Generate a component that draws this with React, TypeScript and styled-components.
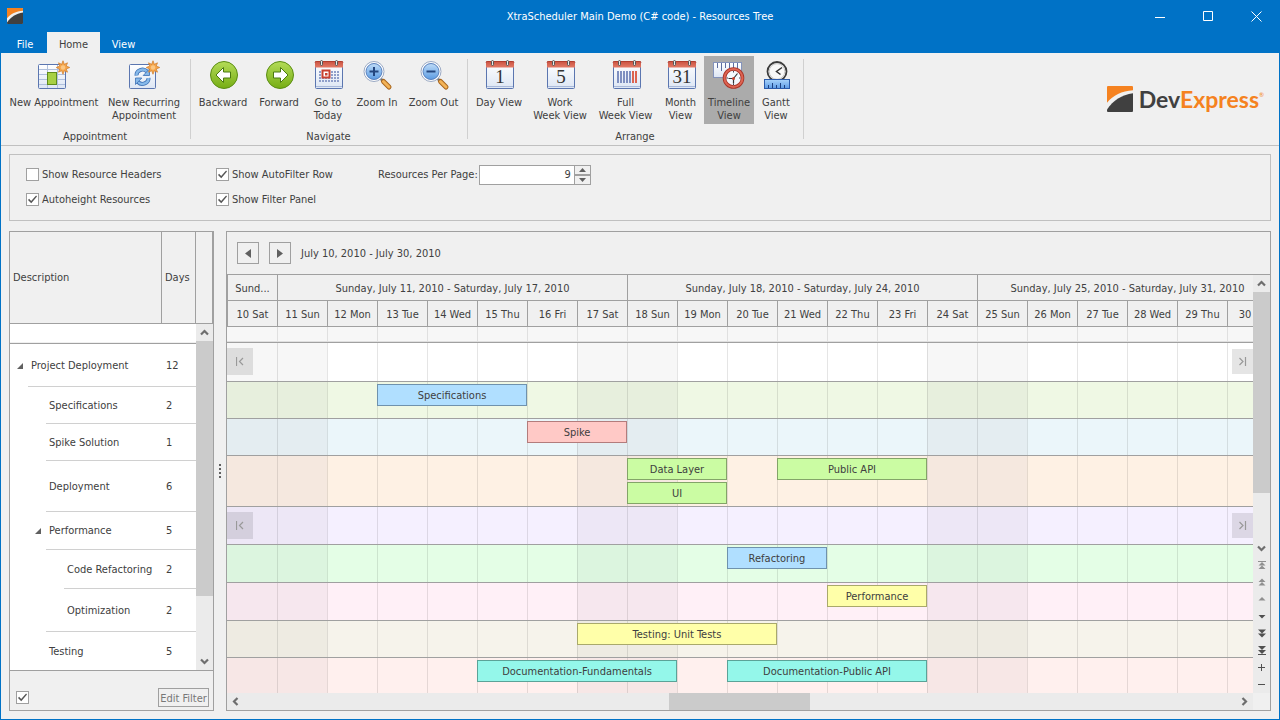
import React from "react";
import styled, { createGlobalStyle, css } from "styled-components";

const BLUE = "#0072c6";
const FACE = "#f0f0f0";
const LINE = "#a0a0a0";
const TEXT = "#404040";

const GlobalStyle = createGlobalStyle`
  *, *::before, *::after { box-sizing: border-box; }
  body {
    margin: 0;
    background: ${FACE};
    color: ${TEXT};
    font: 11px/13px "DejaVu Sans Condensed", Tahoma, "DejaVu Sans", sans-serif;
  }
  button, input { font: inherit; color: inherit; margin: 0; padding: 0; }
  svg { display: block; }
`;

/* ---------- window frame ---------- */

const Window = styled.div`
  min-height: 100vh;
  display: flex;
  flex-direction: column;
`;

const TitleBar = styled.header`
  display: grid;
  grid-template-columns: 1fr auto 1fr;
  align-items: center;
  height: 32px;
  background: ${BLUE};
  color: #fff;
`;

const AppIcon = styled.span`
  margin-left: 7px;
`;

const Title = styled.h1`
  margin: 0;
  font: inherit;
`;

const WindowButtons = styled.div`
  display: flex;
  justify-content: flex-end;
`;

const WindowButton = styled.button`
  display: grid;
  place-items: center;
  width: 48px;
  height: 32px;
  border: 0;
  background: none;
  color: #fff;
`;

const TabBar = styled.nav`
  display: flex;
  height: 21px;
  padding-left: 3px;
  background: ${BLUE};
`;

const Tab = styled.button<{ $width: number; $active?: boolean }>`
  width: ${(p) => p.$width}px;
  padding-top: 3px;
  border: 0;
  text-align: center;
  background: ${(p) => (p.$active ? FACE : "transparent")};
  color: ${(p) => (p.$active ? TEXT : "#fff")};
`;

const Frame = styled.div`
  flex: 1;
  display: flex;
  flex-direction: column;
  border: solid ${BLUE};
  border-width: 0 1px 1px;
`;

/* ---------- ribbon ---------- */

const Ribbon = styled.div`
  display: flex;
  align-items: center;
  justify-content: space-between;
  height: 93px;
  border-bottom: 1px solid #c0c0c0;
`;

const RibbonGroups = styled.div`
  display: flex;
`;

const RibbonGroup = styled.section`
  display: flex;
  flex-direction: column;
  justify-content: space-between;
  height: 87px;
  padding: 0 6px 0 4px;
  background: linear-gradient(#d0d0d0, #d0d0d0) right 3px / 1px 80px no-repeat;
`;

const RibbonItems = styled.div`
  display: flex;
`;

const GroupCaption = styled.div`
  text-align: center;
`;

const RibbonButton = styled.button<{ $width: number; $active?: boolean }>`
  display: flex;
  flex-direction: column;
  align-items: center;
  gap: 5px;
  width: ${(p) => p.$width}px;
  height: 68px;
  padding-top: 3px;
  border: 0;
  background: ${(p) => (p.$active ? "#ababab" : "transparent")};
  white-space: pre;
  text-align: center;
`;

const Brand = styled.div`
  display: flex;
  align-items: center;
  gap: 6px;
  margin-right: 15px;
`;

const BrandName = styled.span`
  font: 700 23px/26px Lato, sans-serif;
  color: #404040;
`;

const BrandAccent = styled.span`
  color: #f58220;
`;

const Registered = styled.sup`
  font: 6px/8px Lato, sans-serif;
  vertical-align: 11px;
  color: #f58220;
`;

/* ---------- option panel ---------- */

const Content = styled.main`
  flex: 1;
  display: flex;
  flex-direction: column;
  gap: 10px;
  padding: 8px;
`;

const Options = styled.section`
  display: grid;
  grid-template-columns: 190px 162px auto;
  grid-template-rows: 25px 25px;
  align-items: center;
  justify-content: start;
  height: 67px;
  padding: 7px 16px;
  border: 1px solid #c0c0c0;
`;

const CheckLabel = styled.label`
  display: flex;
  align-items: center;
  gap: 3px;
`;

const CheckBox = styled.input.attrs({ type: "checkbox" })`
  appearance: none;
  display: grid;
  place-items: center;
  width: 13px;
  height: 13px;
  border: 1px solid ${LINE};
  background: #fff;

  &:checked::before {
    content: "";
    width: 9px;
    height: 9px;
    background: #555;
    clip-path: polygon(0 55%, 12% 42%, 35% 68%, 90% 5%, 100% 16%, 36% 92%);
  }
`;

const SpinField = styled.div`
  display: flex;
  align-items: center;
`;

const SpinInput = styled.input`
  width: 96px;
  height: 20px;
  margin-left: 1px;
  padding-right: 3px;
  border: 1px solid ${LINE};
  background: #fff;
  text-align: right;
`;

const SpinButtons = styled.div`
  display: flex;
  flex-direction: column;
`;

const SpinButton = styled.button`
  display: grid;
  place-items: center;
  width: 16px;
  height: 10px;
  border: 1px solid ${LINE};
  border-left: 0;
  background: ${FACE};
`;

/* ---------- shared scroll bars ---------- */

const ScrollBar = styled.div<{ $horizontal?: boolean }>`
  display: flex;
  flex-direction: ${(p) => (p.$horizontal ? "row" : "column")};
  background: #ebebeb;
`;

const ScrollButton = styled.button`
  display: grid;
  place-items: center;
  flex: none;
  width: 17px;
  height: 17px;
  border: 0;
  background: none;
  color: #777;
`;

const ScrollSpace = styled.span<{ $size: number; $thumb?: boolean }>`
  flex: ${(p) => p.$size} 1 0;
  background: ${(p) => (p.$thumb ? "#cbcbcb" : "transparent")};
`;

/* ---------- resources tree ---------- */

const Workspace = styled.div`
  flex: 1;
  display: grid;
  grid-template-columns: 205px 12px minmax(0, 1fr);
`;

const TreePanel = styled.section`
  display: grid;
  grid-template-columns: minmax(0, 1fr) 17px;
  grid-template-rows: 92px 1fr auto;
  border: 1px solid ${LINE};
`;

const TreeTable = styled.table`
  grid-area: 1 / 1 / 3 / 3;
  display: flex;
  flex-direction: column;
`;

const TreeHead = styled.thead`
  display: block;
`;

const TreeHeadRow = styled.tr`
  display: grid;
  grid-template-columns: minmax(0, 1fr) 34px 17px;
  height: 92px;
  border-bottom: 1px solid ${LINE};
`;

const TreeHeadCell = styled.th`
  display: flex;
  align-items: center;
  padding: 0 3px;
  border-right: 1px solid ${LINE};
  font-weight: 400;
`;

const TreeBody = styled.tbody`
  flex: 1;
  display: block;
  margin-right: 17px;
  background: #fff;
`;

const FilterRow = styled.tr`
  display: grid;
  grid-template-columns: minmax(0, 1fr) 34px;
  height: 20px;
  border-bottom: 1px solid ${LINE};
  box-shadow: inset 0 -1px 0 #f0f0f0;
`;

const FilterCell = styled.td`
  display: flex;
  padding: 0;
`;

const FilterInput = styled.input`
  width: 100%;
  padding: 0 3px;
  border: 0;
  background: transparent;
`;

const TreeRow = styled.tr<{ $height: number; $indent: number; $last?: boolean }>`
  display: grid;
  grid-template-columns: minmax(0, 1fr) 34px;
  align-items: center;
  height: ${(p) => p.$height}px;
  margin-left: ${(p) => 18 * p.$indent + 18}px;
  border-bottom: ${(p) => (p.$last ? "0" : "1px solid #d0d0d0")};
`;

const TreeName = styled.td<{ $shift: number }>`
  display: flex;
  align-items: center;
  padding: 0 0 0 ${(p) => 18 * p.$shift + 3}px;
  white-space: nowrap;
`;

const Expander = styled.button`
  width: 14px;
  height: 13px;
  margin-left: -14px;
  border: 0;
  background: none;
`;

const TreeDays = styled.td`
  padding: 0 0 0 4px;
`;

const TreeScroll = styled(ScrollBar)`
  grid-area: 2 / 2;
`;

const TreeFooter = styled.div`
  grid-column: 1 / -1;
  display: flex;
  align-items: center;
  justify-content: space-between;
  height: 40px;
  padding: 14px 4px 0 6px;
  border-top: 1px solid ${LINE};
`;

const EditFilter = styled.button`
  display: flex;
  align-items: center;
  justify-content: center;
  width: 51px;
  height: 19px;
  padding-top: 1px;
  border: 1px solid ${LINE};
  background: ${FACE};
  color: #777;
  white-space: nowrap;
`;

const Splitter = styled.div`
  display: flex;
  flex-direction: column;
  align-items: center;
  justify-content: center;
  gap: 2px;
`;

const SplitterDot = styled.span`
  width: 2px;
  height: 2px;
  background: #606060;
`;

/* ---------- scheduler ---------- */

const Scheduler = styled.section`
  display: flex;
  flex-direction: column;
  border: 1px solid ${LINE};
`;

const DateNavigator = styled.div`
  display: flex;
  align-items: center;
  gap: 10px;
  height: 43px;
  padding-left: 10px;
  border-bottom: 1px solid ${LINE};
`;

const DateButton = styled.button`
  display: grid;
  place-items: center;
  width: 22px;
  height: 22px;
  border: 1px solid ${LINE};
  background: ${FACE};
`;

const SchedulerBody = styled.div`
  flex: 1;
  display: grid;
  grid-template-columns: minmax(0, 1fr) 17px;
  grid-template-rows: 1fr 17px;
`;

const Timeline = styled.div`
  display: flex;
  flex-direction: column;
  overflow: hidden;
`;

const dayColumns = css`
  display: grid;
  grid-template-columns: repeat(21, minmax(50px, 1fr));
`;

const HeaderRow = styled.div`
  ${dayColumns}
  height: 26px;
`;

const HeaderCell = styled.div<{ $span: number }>`
  grid-column: span ${(p) => p.$span};
  display: flex;
  align-items: center;
  justify-content: center;
  padding-top: 2px;
  border: solid ${LINE};
  border-width: 0 0 1px 1px;
  white-space: nowrap;
`;

const AllDayRow = styled.div`
  ${dayColumns}
  height: 16px;
  border-bottom: 1px solid ${LINE};
`;

const AllDayCell = styled.div`
  background: #f7f7f7;
  border-bottom: 1px solid #e0e0e0;

  & + & { border-left: 1px solid #e0e0e0; }
`;

const ResourceRow = styled.div<{ $height: number; $last?: boolean }>`
  position: relative;
  display: flex;
  flex-direction: column;
  flex: ${(p) => (p.$last ? "1 0" : "0 0")} ${(p) => p.$height}px;
  border-bottom: ${(p) => (p.$last ? "0" : `1px solid ${LINE}`)};
`;

const ResourceGrid = styled.div<{ $lanes: number }>`
  ${dayColumns}
  flex: 1;
  grid-template-rows: 2px repeat(${(p) => p.$lanes}, 24px) 1fr;
`;

const DayCell = styled.div<{ $column: number; $color: string }>`
  grid-column: ${(p) => p.$column};
  grid-row: 1 / -1;
  background: ${(p) => p.$color};
  border-left: ${(p) => (p.$column > 1 ? "1px solid rgba(0, 0, 0, 0.1)" : "0")};
`;

const Appointment = styled.div<{ $start: number; $days: number; $lane: number; $fill: string; $edge: string }>`
  grid-column: ${(p) => p.$start} / span ${(p) => p.$days};
  grid-row: ${(p) => p.$lane + 1};
  display: flex;
  align-items: center;
  justify-content: center;
  height: 22px;
  border: 1px solid ${(p) => p.$edge};
  background: ${(p) => p.$fill};
  white-space: nowrap;
`;

const JumpButton = styled.button<{ $side: "left" | "right" }>`
  position: absolute;
  top: ${(p) => (p.$side === "left" ? 5 : 6)}px;
  ${(p) => p.$side}: 0;
  display: grid;
  place-items: center;
  width: ${(p) => (p.$side === "left" ? 26 : 21)}px;
  height: ${(p) => (p.$side === "left" ? 27 : 25)}px;
  border: 0;
  background: rgba(0, 0, 0, 0.1);
`;

/* ---------- drawings ---------- */

const BrandMark = ({ size }: { size: number }) => (
  <svg width={size} height={size} viewBox="0 0 25 25" aria-hidden="true">
    <rect width="25" height="25" rx="1.5" fill="#f0f0f0" />
    <path d="M1 0H24Q25 0 25 1V4.200C14 5 6 9 0 16V1Q0 0 1 0Z" fill="#f58220" />
    <path d="M25 7V24Q25 25 24 25H1Q0 25 0 24V22.500C6 14 14 8.500 25 7Z" fill="#404040" />
  </svg>
);

const Defs = () => (
  <svg width="0" height="0" style={{ position: "absolute" }} aria-hidden="true">
    <defs>
      <linearGradient id="paper" x1="0" y1="0" x2="0" y2="1">
        <stop offset="0" stopColor="#ffffff" />
        <stop offset="1" stopColor="#dde6f4" />
      </linearGradient>
      <linearGradient id="red" x1="0" y1="0" x2="0" y2="1">
        <stop offset="0" stopColor="#c9503f" />
        <stop offset="1" stopColor="#e37a66" />
      </linearGradient>
      <linearGradient id="green" x1="0" y1="0" x2="0" y2="1">
        <stop offset="0" stopColor="#b4dc58" />
        <stop offset="1" stopColor="#76ad14" />
      </linearGradient>
      <linearGradient id="lens" x1="0" y1="0" x2="0" y2="1">
        <stop offset="0" stopColor="#bfdcf8" />
        <stop offset="1" stopColor="#5b9be2" />
      </linearGradient>
      <linearGradient id="ruler" x1="0" y1="0" x2="0" y2="1">
        <stop offset="0" stopColor="#a9d4fb" />
        <stop offset="1" stopColor="#5d9be6" />
      </linearGradient>
    </defs>
  </svg>
);

const Icon = ({ children }: { children: React.ReactNode }) => (
  <svg width="32" height="32" viewBox="0 0 32 32" fill="none" aria-hidden="true">
    {children}
  </svg>
);

const Spark = () => (
  <g transform="translate(25 8.500) scale(0.900)">
    <path
      d="M0-7.500 1.500-3.500 5-5.200 3.600-1.600 7.500 0 3.600 1.600 5 5.200 1.500 3.600 0 7.500-1.500 3.600-5 5.200-3.600 1.600-7.500 0-3.600-1.600-5-5.200-1.500-3.500Z"
      fill="#f5a54a"
      stroke="#cf7d2c"
      strokeWidth="0.8"
    />
    <circle r="2.500" fill="#fbc783" />
  </g>
);

const NewAppointmentIcon = () => (
  <Icon>
    <rect x="0.500" y="5.500" width="27" height="24" rx="1" fill="url(#paper)" stroke="#5b76b0" />
    <path d="M1 10.500H27M1 15.500H27M1 20.500H27M1 25.500H27" stroke="#b0c0dc" />
    <path d="M9.500 6V29M19.500 6V29" stroke="#b0c0dc" />
    <rect x="9.500" y="13.500" width="9" height="12" fill="#a7d044" stroke="#5f8c1c" />
    <Spark />
  </Icon>
);

const RecurringIcon = () => (
  <Icon>
    <rect x="1.500" y="5.500" width="26" height="24" rx="1" fill="url(#paper)" stroke="#5b76b0" />
    <path d="M8.500 16.500A6 5.500 0 0 1 19 12.500" stroke="#3b6fb4" strokeWidth="4" />
    <path d="M8.500 16.500A6 5.500 0 0 1 19 12.500" stroke="#86b9ea" strokeWidth="2.400" />
    <path d="M21.500 10V16.500H15.200Z" fill="#86b9ea" stroke="#3b6fb4" strokeWidth="0.800" />
    <path d="M20.500 19A6 5.500 0 0 1 10 23" stroke="#3b6fb4" strokeWidth="4" />
    <path d="M20.500 19A6 5.500 0 0 1 10 23" stroke="#86b9ea" strokeWidth="2.400" />
    <path d="M7.500 25.500V19H13.800Z" fill="#86b9ea" stroke="#3b6fb4" strokeWidth="0.800" />
    <Spark />
  </Icon>
);

const ArrowIcon = ({ forward }: { forward?: boolean }) => (
  <Icon>
    <circle cx="17" cy="16" r="13.500" fill="url(#green)" stroke="#5b8d13" />
    <path
      d={forward ? "M25 16 17.500 8.500V13H10.500V19H17.500V23.500Z" : "M9 16 16.500 8.500V13H23.500V19H16.500V23.500Z"}
      fill="#fff"
      stroke="#4a7a10"
    />
  </Icon>
);

const Calendar = ({ children }: { children: React.ReactNode }) => (
  <Icon>
    <rect x="3.500" y="2.500" width="27" height="27" rx="1" fill="url(#paper)" stroke="#5b76b0" />
    <path d="M4 27.500H30" stroke="#a9b9da" />
    <path d="M3 8.500V3.500Q3 2 4.500 2H29.500Q31 2 31 3.500V8.500Z" fill="url(#red)" />
    <path d="M3 3.500Q3 2.500 4.500 2.500H29.500Q31 2.500 31 3.500" stroke="#b23d2e" />
    <rect x="8.500" y="1.500" width="2" height="5" rx="1" fill="#e8e8e8" stroke="#555" />
    <rect x="23.500" y="1.500" width="2" height="5" rx="1" fill="#e8e8e8" stroke="#555" />
    {children}
  </Icon>
);

const DateCalendar = ({ day }: { day: string }) => (
  <Calendar>
    <text x="17" y="24" textAnchor="middle" fill="#333" fontFamily="Liberation Serif, serif" fontSize="19">
      {day}
    </text>
  </Calendar>
);

const TodayIcon = () => (
  <Calendar>
    {[12, 15, 18, 21].map((y) => (
      <path key={y} d={`M7 ${y + 1}H27`} stroke="#8f9fca" strokeWidth="2" strokeDasharray="2 1" />
    ))}
    <rect x="10.500" y="11.500" width="7" height="7" fill="#fff" stroke="#c8402f" strokeWidth="2" />
    <rect x="13" y="14" width="2.500" height="2.500" fill="#c8402f" />
  </Calendar>
);

const FullWeekIcon = () => (
  <Calendar>
    <path d="M8 12V24M11 12V24M14 12V24M17 12V24M20 12V24" stroke="#7e8fc0" strokeWidth="2" />
    <path d="M23 12V24M26 12V24" stroke="#dd6450" strokeWidth="2" />
  </Calendar>
);

const ZoomIcon = ({ plus }: { plus?: boolean }) => (
  <Icon>
    <path d="M19.500 19.500 23 23" stroke="#777" strokeWidth="2.500" />
    <path d="M22.500 22.500 28 28" stroke="#a8651c" strokeWidth="5" strokeLinecap="round" />
    <path d="M22.500 22.500 28 28" stroke="#f3b357" strokeWidth="3" strokeLinecap="round" />
    <circle cx="13" cy="12.500" r="10" fill="#fff" stroke="#9aa9c4" />
    <circle cx="13" cy="12.500" r="8" fill="url(#lens)" stroke="#5880bd" />
    <path d={plus ? "M8.500 12.500H17.500M13 8V17" : "M8.500 12.500H17.500"} stroke="#24467e" strokeWidth="2" />
  </Icon>
);

const TimelineIcon = () => (
  <Icon>
    <rect x="0.500" y="3.500" width="28" height="15" fill="url(#paper)" stroke="#8493bb" />
    <path d="M4.500 4V9M8.500 4V12M12.500 4V9M16.500 4V9M20.500 4V12M24.500 4V9" stroke="#5c6da0" />
    <circle cx="20.500" cy="19" r="9" fill="#f4f8fd" stroke="#a83428" strokeWidth="3.600" />
    <circle cx="20.500" cy="19" r="9" stroke="#de6452" strokeWidth="2" />
    <path d="M20.500 12V13.500M20.500 24.500V26M13.500 19H15M26 19H27.500" stroke="#445" />
    <path d="M15.500 19.500H20.500L24.500 14.500M20.500 19.500V24.500" stroke="#333" strokeWidth="1.200" />
    <circle cx="20.500" cy="19.500" r="1.500" fill="#c8402f" />
  </Icon>
);

const GanttIcon = () => (
  <Icon>
    <circle cx="17" cy="12.500" r="9.500" fill="#f8f8f8" stroke="#3c3c3c" strokeWidth="1.800" />
    <circle cx="17" cy="12.500" r="7.800" stroke="#c8c8c8" />
    <path d="M22 8.500 16.500 12.500 20.500 15.500" stroke="#333" strokeWidth="1.500" />
    <rect x="4.500" y="20.500" width="25" height="9" fill="url(#ruler)" stroke="#2c5cab" />
    <path d="M8.500 29V26M12.500 29V24M16.500 29V26M20.500 29V24M24.500 29V26" stroke="#1f4280" />
  </Icon>
);

const turn = { up: 0, right: 90, down: 180, left: 270 };

const Chevron = ({ to }: { to: keyof typeof turn }) => (
  <svg width="9" height="9" viewBox="0 0 9 9" fill="none" aria-hidden="true">
    <path d="M1 6.500 4.500 3 8 6.500" transform={`rotate(${turn[to]} 4.500 4.500)`} stroke="#6e6e6e" strokeWidth="2.200" />
  </svg>
);

const Triangle = ({ to }: { to: "left" | "right" }) => (
  <svg width="8" height="9" viewBox="0 0 8 9" aria-hidden="true">
    <path d={to === "left" ? "M7 0V9L1 4.500Z" : "M1 0V9L7 4.500Z"} fill="#606060" />
  </svg>
);

const SpinGlyph = ({ down }: { down?: boolean }) => (
  <svg width="7" height="4" viewBox="0 0 7 4" aria-hidden="true">
    <path d={down ? "M0 0H7L3.500 4Z" : "M0 4H7L3.500 0Z"} fill="#606060" />
  </svg>
);

const JumpGlyph = ({ to }: { to: "left" | "right" }) => (
  <svg width="9" height="9" viewBox="0 0 9 9" fill="none" aria-hidden="true">
    <path
      d={to === "left" ? "M0.500 0V9M7 1 3.500 4.500 7 8" : "M7.500 0V9M1.500 1 5 4.500 1.500 8"}
      stroke="#999"
      strokeWidth="1.200"
    />
  </svg>
);

/* ---------- data ---------- */

const ribbonGroups = [
  {
    caption: "Appointment",
    items: [
      { text: "New Appointment", width: 98, icon: <NewAppointmentIcon /> },
      { text: "New Recurring\nAppointment", width: 82, icon: <RecurringIcon /> },
    ],
  },
  {
    caption: "Navigate",
    items: [
      { text: "Backward", width: 56, icon: <ArrowIcon /> },
      { text: "Forward", width: 56, icon: <ArrowIcon forward /> },
      { text: "Go to\nToday", width: 42, icon: <TodayIcon /> },
      { text: "Zoom In", width: 56, icon: <ZoomIcon plus /> },
      { text: "Zoom Out", width: 57, icon: <ZoomIcon /> },
    ],
  },
  {
    caption: "Arrange",
    items: [
      { text: "Day View", width: 54, icon: <DateCalendar day="1" /> },
      { text: "Work\nWeek View", width: 68, icon: <DateCalendar day="5" /> },
      { text: "Full\nWeek View", width: 63, icon: <FullWeekIcon /> },
      { text: "Month\nView", width: 47, icon: <DateCalendar day="31" /> },
      { text: "Timeline\nView", width: 50, icon: <TimelineIcon />, active: true },
      { text: "Gantt\nView", width: 44, icon: <GanttIcon /> },
    ],
  },
];

const tree = [
  { name: "Project Deployment", days: 12, level: 0, height: 43, parent: true },
  { name: "Specifications", days: 2, level: 1, height: 37 },
  { name: "Spike Solution", days: 1, level: 1, height: 37 },
  { name: "Deployment", days: 6, level: 1, height: 51 },
  { name: "Performance", days: 5, level: 1, height: 38, parent: true },
  { name: "Code Refactoring", days: 2, level: 2, height: 39 },
  { name: "Optimization", days: 2, level: 2, height: 43 },
  { name: "Testing", days: 5, level: 1, height: 38 },
];

const weeks = [
  { text: "Sund...", days: 1 },
  { text: "Sunday, July 11, 2010 - Saturday, July 17, 2010", days: 7 },
  { text: "Sunday, July 18, 2010 - Saturday, July 24, 2010", days: 7 },
  { text: "Sunday, July 25, 2010 - Saturday, July 31, 2010", days: 6 },
];

const weekdayNames = ["Sun", "Mon", "Tue", "Wed", "Thu", "Fri", "Sat"];
const days = Array.from({ length: 21 }, (_, i) => ({
  text: `${10 + i} ${weekdayNames[(i + 6) % 7]}`,
  weekend: (i + 6) % 7 === 0 || (i + 6) % 7 === 6,
}));

const paint = {
  blue: ["#b0dfff", "#6f92ad"],
  pink: ["#ffc9c6", "#b37c7c"],
  green: ["#cbfca3", "#83a468"],
  yellow: ["#ffffa9", "#a9a96b"],
  teal: ["#94f7ea", "#5ba398"],
};

type Item = { text: string; date: number; days: number; lane?: number; color: keyof typeof paint };
type Resource = { day: string; weekend: string; height: number; lanes?: number; jump?: boolean; items: Item[] };

const resources: Resource[] = [
  { day: "#ffffff", weekend: "#f7f7f7", height: 39, jump: true, items: [] },
  { day: "#eff8e4", weekend: "#e7efdd", height: 37, items: [{ text: "Specifications", date: 13, days: 3, color: "blue" }] },
  { day: "#ebf6fa", weekend: "#e4edf1", height: 37, items: [{ text: "Spike", date: 16, days: 2, color: "pink" }] },
  {
    day: "#fef1e4",
    weekend: "#f5e8df",
    height: 51,
    lanes: 2,
    items: [
      { text: "Data Layer", date: 18, days: 2, color: "green" },
      { text: "UI", date: 18, days: 2, lane: 2, color: "green" },
      { text: "Public API", date: 21, days: 3, color: "green" },
    ],
  },
  { day: "#f5f0ff", weekend: "#ede7f6", height: 38, jump: true, items: [] },
  { day: "#e4fee6", weekend: "#dcf5df", height: 38, items: [{ text: "Refactoring", date: 20, days: 2, color: "blue" }] },
  { day: "#fff0f7", weekend: "#f6e7ee", height: 38, items: [{ text: "Performance", date: 22, days: 2, color: "yellow" }] },
  { day: "#f6f3eb", weekend: "#eeebe2", height: 37, items: [{ text: "Testing: Unit Tests", date: 17, days: 4, color: "yellow" }] },
  {
    day: "#fff0ee",
    weekend: "#f7e7e6",
    height: 35,
    items: [
      { text: "Documentation-Fundamentals", date: 15, days: 4, color: "teal" },
      { text: "Documentation-Public API", date: 20, days: 4, color: "teal" },
    ],
  },
];

const pagers = [
  { label: "First resource", path: "M1 0H9V1H1ZM5 1 8.500 4.500H1.500ZM5 4.500 8.500 8H1.500Z", dim: true },
  { label: "Previous page", path: "M5 0.500 8.500 4H1.500ZM5 4 8.500 7.500H1.500Z", dim: true },
  { label: "Previous resource", path: "M5 2 8.500 5.500H1.500Z", dim: true },
  { label: "Next resource", path: "M1.500 3H8.500L5 6.500Z" },
  { label: "Next page", path: "M1 0.500H9L5 4.500ZM1 4.500H9L5 8.500Z" },
  { label: "Last resource", path: "M1 0H9L5 4ZM1 4H9L5 8ZM1 8H9V9H1Z" },
  { label: "More resources per page", path: "M1 4H4V1H5V4H8V5H5V8H4V5H1Z" },
  { label: "Fewer resources per page", path: "M1 4H8V5H1Z" },
];

/* ---------- page ---------- */

const VerticalScroll = ({ thumb, rest }: { thumb: number; rest: number }) => (
  <>
    <ScrollButton aria-label="Scroll up"><Chevron to="up" /></ScrollButton>
    <ScrollSpace $size={thumb} $thumb />
    <ScrollSpace $size={rest} />
    <ScrollButton aria-label="Scroll down"><Chevron to="down" /></ScrollButton>
  </>
);

export default function App() {
  return (
    <Window>
      <GlobalStyle />
      <Defs />
      <TitleBar>
        <AppIcon><BrandMark size={16} /></AppIcon>
        <Title>XtraScheduler Main Demo (C# code) - Resources Tree</Title>
        <WindowButtons>
          <WindowButton aria-label="Minimize">
            <svg width="11" height="11" stroke="currentColor" fill="none"><path d="M0 6.500H10" /></svg>
          </WindowButton>
          <WindowButton aria-label="Maximize">
            <svg width="11" height="11" stroke="currentColor" fill="none"><path d="M0.500 0.500H9.500V9.500H0.500Z" /></svg>
          </WindowButton>
          <WindowButton aria-label="Close">
            <svg width="11" height="11" stroke="currentColor" fill="none"><path d="M0.500 0.500 10.500 10.500M10.500 0.500 0.500 10.500" /></svg>
          </WindowButton>
        </WindowButtons>
      </TitleBar>
      <TabBar>
        <Tab $width={44}>File</Tab>
        <Tab $width={53} $active>Home</Tab>
        <Tab $width={47}>View</Tab>
      </TabBar>

      <Frame>
        <Ribbon>
          <RibbonGroups>
            {ribbonGroups.map((group) => (
              <RibbonGroup key={group.caption}>
                <RibbonItems>
                  {group.items.map((item) => (
                    <RibbonButton key={item.text} $width={item.width} $active={"active" in item}>
                      {item.icon}
                      {item.text}
                    </RibbonButton>
                  ))}
                </RibbonItems>
                <GroupCaption>{group.caption}</GroupCaption>
              </RibbonGroup>
            ))}
          </RibbonGroups>
          <Brand>
            <BrandMark size={26} />
            <BrandName>
              Dev<BrandAccent>Express</BrandAccent><Registered>®</Registered>
            </BrandName>
          </Brand>
        </Ribbon>

        <Content>
          <Options>
            <CheckLabel><CheckBox />Show Resource Headers</CheckLabel>
            <CheckLabel><CheckBox defaultChecked />Show AutoFilter Row</CheckLabel>
            <SpinField>
              <label htmlFor="per-page">Resources Per Page:</label>
              <SpinInput id="per-page" defaultValue="9" />
              <SpinButtons>
                <SpinButton aria-label="Increase"><SpinGlyph /></SpinButton>
                <SpinButton aria-label="Decrease"><SpinGlyph down /></SpinButton>
              </SpinButtons>
            </SpinField>
            <CheckLabel><CheckBox defaultChecked />Autoheight Resources</CheckLabel>
            <CheckLabel><CheckBox defaultChecked />Show Filter Panel</CheckLabel>
          </Options>

          <Workspace>
            <TreePanel>
              <TreeTable>
                <TreeHead>
                  <TreeHeadRow>
                    <TreeHeadCell>Description</TreeHeadCell>
                    <TreeHeadCell>Days</TreeHeadCell>
                    <TreeHeadCell />
                  </TreeHeadRow>
                </TreeHead>
                <TreeBody>
                  <FilterRow>
                    <FilterCell><FilterInput aria-label="Filter by description" /></FilterCell>
                    <FilterCell><FilterInput aria-label="Filter by days" /></FilterCell>
                  </FilterRow>
                  {tree.map((node, i) => {
                    const next = tree[i + 1];
                    const indent = Math.min(node.level, next ? next.level : node.level);
                    return (
                      <TreeRow key={node.name} $height={node.height} $indent={indent} $last={!next}>
                        <TreeName $shift={node.level - indent}>
                          {node.parent && (
                            <Expander aria-label={`Collapse ${node.name}`}>
                              <svg width="6" height="13" viewBox="0 0 6 13"><path d="M6 4V10H0Z" fill="#606060" /></svg>
                            </Expander>
                          )}
                          {node.name}
                        </TreeName>
                        <TreeDays>{node.days}</TreeDays>
                      </TreeRow>
                    );
                  })}
                </TreeBody>
              </TreeTable>
              <TreeScroll><VerticalScroll thumb={255} rest={57} /></TreeScroll>
              <TreeFooter>
                <CheckBox defaultChecked aria-label="Filter enabled" />
                <EditFilter>Edit Filter</EditFilter>
              </TreeFooter>
            </TreePanel>

            <Splitter>
              <SplitterDot /><SplitterDot /><SplitterDot /><SplitterDot />
            </Splitter>

            <Scheduler>
              <DateNavigator>
                <DateButton aria-label="Previous period"><Triangle to="left" /></DateButton>
                <DateButton aria-label="Next period"><Triangle to="right" /></DateButton>
                <span>July 10, 2010 - July 30, 2010</span>
              </DateNavigator>
              <SchedulerBody>
                <Timeline>
                  <HeaderRow>
                    {weeks.map((week) => (
                      <HeaderCell key={week.text} $span={week.days}>{week.text}</HeaderCell>
                    ))}
                  </HeaderRow>
                  <HeaderRow>
                    {days.map((day) => (
                      <HeaderCell key={day.text} $span={1}>{day.text}</HeaderCell>
                    ))}
                  </HeaderRow>
                  <AllDayRow>
                    {days.map((day) => <AllDayCell key={day.text} />)}
                  </AllDayRow>
                  {resources.map((resource, r) => (
                    <ResourceRow key={r} $height={resource.height} $last={r === resources.length - 1}>
                      <ResourceGrid $lanes={resource.lanes ?? 1}>
                        {days.map((day, d) => (
                          <DayCell key={day.text} $column={d + 1} $color={day.weekend ? resource.weekend : resource.day} />
                        ))}
                        {resource.items.map((item) => (
                          <Appointment
                            key={item.text}
                            $start={item.date - 9}
                            $days={item.days}
                            $lane={item.lane ?? 1}
                            $fill={paint[item.color][0]}
                            $edge={paint[item.color][1]}
                          >
                            {item.text}
                          </Appointment>
                        ))}
                      </ResourceGrid>
                      {resource.jump && (
                        <>
                          <JumpButton $side="left" aria-label="Previous appointment"><JumpGlyph to="left" /></JumpButton>
                          <JumpButton $side="right" aria-label="Next appointment"><JumpGlyph to="right" /></JumpButton>
                        </>
                      )}
                    </ResourceRow>
                  ))}
                </Timeline>
                <ScrollBar>
                  <VerticalScroll thumb={201} rest={47} />
                  {pagers.map((pager) => (
                    <ScrollButton key={pager.label} aria-label={pager.label}>
                      <svg width="10" height="10" viewBox="0 0 10 10" aria-hidden="true">
                        <path d={pager.path} fill={pager.dim ? "#909090" : "#505050"} />
                      </svg>
                    </ScrollButton>
                  ))}
                </ScrollBar>
                <ScrollBar $horizontal>
                  <ScrollButton aria-label="Scroll left"><Chevron to="left" /></ScrollButton>
                  <ScrollSpace $size={425} />
                  <ScrollSpace $size={141} $thumb />
                  <ScrollSpace $size={426} />
                  <ScrollButton aria-label="Scroll right"><Chevron to="right" /></ScrollButton>
                </ScrollBar>
              </SchedulerBody>
            </Scheduler>
          </Workspace>
        </Content>
      </Frame>
    </Window>
  );
}
